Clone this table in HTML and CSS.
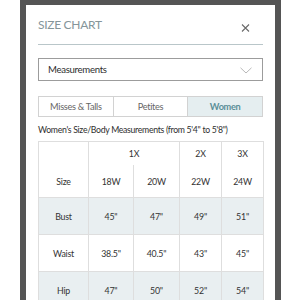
FILE: index.html
```html
<!DOCTYPE html>
<html>
<head>
<meta charset="utf-8">
<link rel="stylesheet" href="styles.css">
</head>
<body>
<div class="frame">
  <div class="panel">
    <div class="header">
      <span class="title">SIZE CHART</span>
      <svg class="close" width="9" height="8" viewBox="0 0 9 8"><path d="M1 0.5 L8 7.5 M8 0.5 L1 7.5" stroke="#6a6a6a" stroke-width="1.1" fill="none"/></svg>
    </div>
    <div class="select">
      <span>Measurements</span>
      <svg class="chev" width="12" height="7" viewBox="0 0 12 7"><path d="M0.5 0.8 L6 6 L11.5 0.8" stroke="#b8b8b8" stroke-width="1" fill="none"/></svg>
    </div>
    <div class="tabs">
      <div class="tab">Misses &amp; Talls</div>
      <div class="tab">Petites</div>
      <div class="tab active">Women</div>
    </div>
    <p class="sub">Women's Size/Body Measurements (from 5'4" to 5'8")</p>
    <table class="chart">
      <colgroup><col class="c1"><col class="c2"><col class="c3"><col class="c4"><col class="c5"></colgroup>
      <tr class="h1"><td></td><td colspan="2">1X</td><td>2X</td><td>3X</td></tr>
      <tr class="h2"><td>Size</td><td>18W</td><td>20W</td><td>22W</td><td>24W</td></tr>
      <tr class="shade"><td>Bust</td><td>45"</td><td>47"</td><td>49"</td><td>51"</td></tr>
      <tr><td>Waist</td><td>38.5"</td><td>40.5"</td><td>43"</td><td>45"</td></tr>
      <tr class="shade"><td>Hip</td><td>47"</td><td>50"</td><td>52"</td><td>54"</td></tr>
    </table>
  </div>
</div>
</body>
</html>
```
FILE: styles.css
```css
html, body {
  margin: 0;
  padding: 0;
  background: #fff;
  overflow: hidden;
}
body {
  font-family: Lato, "Open Sans", sans-serif;
  color: #333;
}
.frame {
  margin-left: 20px;
  width: 249px;
  height: 295px;
  background: #555;
  padding: 5px 6px 0 6px;
}
.panel {
  background: #fff;
  height: 295px;
  overflow: hidden;
  padding: 0 12px;
}
.header {
  display: flex;
  justify-content: space-between;
  align-items: center;
  height: 39px;
  border-bottom: 1px solid #b9c6c9;
}
.title {
  font-size: 12px;
  font-weight: 400;
  color: #85959a;
  letter-spacing: -0.3px;
  margin-top: -1px;
}
.close {
  margin-right: 13px;
  margin-top: 6px;
}
.select {
  margin-top: 13px;
  height: 21px;
  border: 1px solid #9c9c9c;
  display: flex;
  align-items: center;
  justify-content: space-between;
  padding: 0 10px 0 9px;
  font-size: 9.6px;
  letter-spacing: -0.3px;
  color: #2e2e2e;
}
.chev {
  margin-top: 1px;
}
.tabs {
  margin-top: 15px;
  display: flex;
  height: 21px;
  border: 1px solid #d2d2d2;
  box-sizing: border-box;
}
.tab {
  flex: 1;
  display: flex;
  align-items: center;
  justify-content: center;
  font-size: 9.2px;
  letter-spacing: -0.3px;
  color: #666;
  border-left: 1px solid #d2d2d2;
}
.tab:first-child {
  border-left: none;
}
.tab.active {
  background: #e5eef0;
  color: #5b8f98;
  font-weight: 700;
}
.sub {
  margin: 8px 0 0 0;
  font-size: 8.7px;
  letter-spacing: -0.3px;
  line-height: 10px;
  color: #2e2e2e;
  white-space: nowrap;
}
.chart {
  margin-top: 6px;
  width: 225px;
  border-collapse: collapse;
  table-layout: fixed;
  font-size: 8.8px;
  letter-spacing: -0.2px;
  color: #333;
}
.c1 { width: 50px; }
.c2 { width: 45px; }
.c3 { width: 46px; }
.c4 { width: 42px; }
.c5 { width: 42px; }
.chart td {
  border: 1px solid #dedede;
  text-align: center;
  padding: 0;
  height: 36px;
}
.h1 td {
  height: 23px;
  border-bottom-style: hidden;
}
.h2 td {
  height: 32px;
}
.shade td {
  background: #e9eff1;
}
```
